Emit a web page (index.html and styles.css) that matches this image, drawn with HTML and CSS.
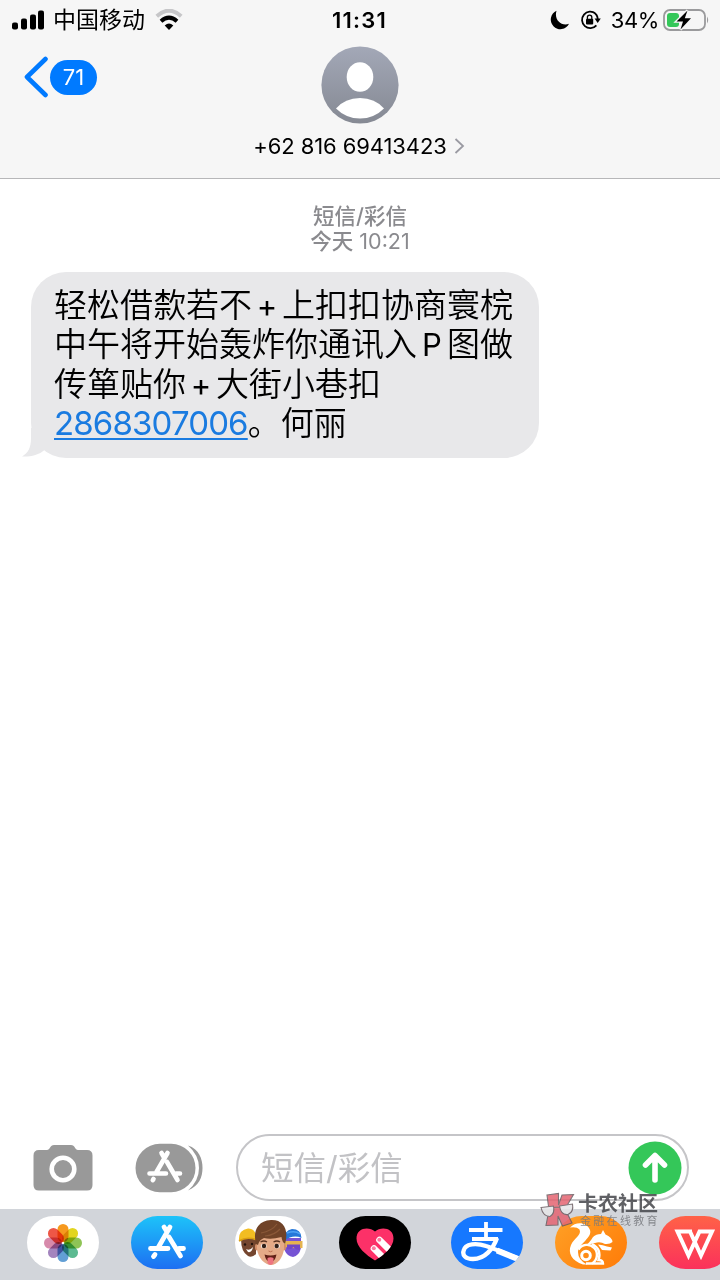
FILE: index.html
```html
<!DOCTYPE html>
<html lang="zh-CN">
<head>
    <meta charset="UTF-8">
    <meta name="viewport" content="width=device-width, initial-scale=1.0">
    <title>短信</title>
    <link rel="stylesheet" href="styles.css">
</head>
<body>
    <div class="phone">
        <header class="header">
            <!-- Status bar -->
            <div class="status-bar">
                <div class="status-left">
                    <svg class="signal" width="33" height="20" viewBox="0 0 33 20">
                        <rect x="0" y="12.5" width="6" height="7" rx="2"/>
                        <rect x="9" y="8.5" width="6" height="11" rx="2"/>
                        <rect x="18" y="4.5" width="6" height="15" rx="2"/>
                        <rect x="26" y="0.5" width="6" height="19" rx="2"/>
                    </svg>
                    <span class="carrier">中国移动</span>
                    <svg class="wifi" width="28" height="22" viewBox="0 0 28 22">
                        <path d="M1.8 7.2Q14-3.8 26.2 7.2" fill="none" stroke="#c6c6c8" stroke-width="4"/>
                        <path d="M6 12.2Q14 5 22 12.2" fill="none" stroke="#000" stroke-width="4"/>
                        <path d="M9.7 16.5Q14 12.7 18.3 16.5L14 21Z"/>
                    </svg>
                </div>
                <span class="time">11:31</span>
                <div class="status-right">
                    <svg width="20" height="20" viewBox="0 0 20 20">
                        <path d="M6.5 0.8A9.6 9.6 0 1 0 19 13.8C11 16.5 3.8 9.5 6.5 0.8Z"/>
                    </svg>
                    <svg class="lock" width="21" height="20" viewBox="0 0 21 20">
                        <path d="M15.5 3.6A8.2 8.2 0 1 0 16.4 15.3M14 2.5A8.2 8.2 0 0 1 17.7 9" fill="none" stroke="#000" stroke-width="1.8"/>
                        <path d="M14.6 8.6H20.8L17.7 13Z"/>
                        <rect x="6" y="8.8" width="7.2" height="5.6" rx="1"/>
                        <path d="M7.4 9V7.3a2.2 2.2 0 0 1 4.4 0V9" fill="none" stroke="#000" stroke-width="1.3"/>
                    </svg>
                    <span class="percent">34%</span>
                    <svg class="battery" width="47" height="24" viewBox="0 0 47 24">
                        <rect x="1" y="2" width="41" height="20" rx="6" fill="none" stroke="#9a9a9c" stroke-width="1.8"/>
                        <path d="M44 8.5q2.4 3.5 0 7Z" fill="#9a9a9c"/>
                        <rect x="4" y="5" width="12" height="14" rx="3" fill="#34c759"/>
                        <path d="M24.5 2.5L13.5 13.5H20L17.5 21.5L28 10.2H21.8Z" stroke="#f6f6f6" stroke-width="2.6" paint-order="stroke"/>
                    </svg>
                </div>
            </div>

            <!-- Back button, avatar and number -->
            <div class="nav">
                <div class="back">
                    <svg width="24" height="42" viewBox="0 0 24 42">
                        <path d="M21.5 3L3 21L21.5 39" fill="none" stroke="#007aff" stroke-width="4.6" stroke-linecap="round" stroke-linejoin="round"/>
                    </svg>
                    <span class="badge">71</span>
                </div>
                <div class="contact">
                    <svg width="78" height="78" viewBox="0 0 78 78">
                        <defs>
                            <linearGradient id="avatarBg" x1="0" y1="0" x2="0" y2="1">
                                <stop offset="0" stop-color="#a3a8b7"/>
                                <stop offset="1" stop-color="#858993"/>
                            </linearGradient>
                        </defs>
                        <circle cx="39" cy="39" r="38.6" fill="url(#avatarBg)"/>
                        <ellipse cx="39" cy="31" rx="13.3" ry="14.8" fill="#fff"/>
                        <path d="M15 62.5Q24 52 39 52T63 62.5Q53 72.5 39 72.5T15 62.5Z" fill="#fff"/>
                    </svg>
                    <div class="number">
                        <span>+62 816 69413423</span>
                        <svg width="11" height="18" viewBox="0 0 11 18">
                            <path d="M1.5 2L9 9L1.5 16" fill="none" stroke="#9a9aa2" stroke-width="1.8"/>
                        </svg>
                    </div>
                </div>
            </div>
        </header>

        <!-- Conversation -->
        <main class="messages">
            <div class="stamp">
                <div class="stamp-type">短信/彩信</div>
                <div><span class="stamp-type">今天</span> 10:21</div>
            </div>
            <div class="bubble">
                <svg class="tail" width="40" height="30" viewBox="0 0 40 30">
                    <path d="M9 0V10C9 20 6 25 0 28.5C8 29 17 27 22.5 22L40 28V0Z" fill="#e8e8ea"/>
                </svg>
                <p>轻松借歀若不<span class="latin">+</span>上扣扣协商寰梡</p>
                <p>中午将开始轰炸你通讯入<span class="latin">P</span>图做</p>
                <p>传箪贴你<span class="latin">+</span>大街小巷扣</p>
                <p><a class="link">2868307006</a>。何丽</p>
            </div>
        </main>

        <!-- Message input -->
        <div class="compose">
            <svg class="camera" width="60" height="47" viewBox="0 0 60 47">
                <path d="M6 6H14C17 6 17 1 21 1H38C42 1 42 6 45 6H54Q59.5 6 59.5 11.5V41Q59.5 46.5 54 46.5H6Q.5 46.5 .5 41V11.5Q.5 6 6 6Z" fill="#999"/>
                <circle cx="30" cy="25" r="11.3" fill="none" stroke="#fff" stroke-width="4.6"/>
            </svg>
            <svg class="apps" width="69" height="50" viewBox="0 0 69 50">
                <path d="M53 2.5C64 6 67.5 16 67.5 25S64 43 53 47.5Q64 38 64 25T53 2.5Z" fill="#999"/>
                <rect x="0.5" y="0.8" width="60" height="48.4" rx="24.2" fill="#999"/>
                <path d="M14.5 30.5H31M41 30.5H45M26.5 10L28.5 13.5M32.5 10L21.5 29M32 19L42.5 37M18.5 36L17.8 37.2" fill="none" stroke="#fff" stroke-width="4.6" stroke-linecap="round"/>
            </svg>
            <div class="input">
                <span class="placeholder">短信/彩信</span>
                <svg width="54" height="54" viewBox="0 0 54 54">
                    <circle cx="27" cy="27" r="26.5" fill="#34c759"/>
                    <path d="M27 39V15M17.5 24L27 14.5L36.5 24" fill="none" stroke="#fff" stroke-width="5.6" stroke-linecap="round" stroke-linejoin="round"/>
                </svg>
            </div>
        </div>

        <!-- App drawer -->
        <div class="drawer">
            <div class="app photos">
                <svg width="40" height="40" viewBox="-20 -20 40 40">
                    <g class="petals">
                        <rect x="-5.5" y="-19" width="11" height="18" rx="5.5" fill="#f6991e"/>
                        <rect x="-5.5" y="-19" width="11" height="18" rx="5.5" fill="#e2d51f" transform="rotate(45)"/>
                        <rect x="-5.5" y="-19" width="11" height="18" rx="5.5" fill="#8fc456" transform="rotate(90)"/>
                        <rect x="-5.5" y="-19" width="11" height="18" rx="5.5" fill="#5cba91" transform="rotate(135)"/>
                        <rect x="-5.5" y="-19" width="11" height="18" rx="5.5" fill="#629fd5" transform="rotate(180)"/>
                        <rect x="-5.5" y="-19" width="11" height="18" rx="5.5" fill="#a384be" transform="rotate(225)"/>
                        <rect x="-5.5" y="-19" width="11" height="18" rx="5.5" fill="#d78aab" transform="rotate(270)"/>
                        <rect x="-5.5" y="-19" width="11" height="18" rx="5.5" fill="#ee5746" transform="rotate(315)"/>
                    </g>
                </svg>
            </div>
            <div class="app store">
                <svg width="72" height="53" viewBox="0 0 72 53">
                    <path d="M19.5 32.5H37M48 32.5H52.5M33 11L35.5 15M39 11L27.5 31M38 21L49.5 40M24 38.5L22.5 40.5" fill="none" stroke="#fff" stroke-width="4.8" stroke-linecap="round"/>
                </svg>
            </div>
            <div class="app memoji">
                <svg width="72" height="53" viewBox="0 0 72 53">
                    <path d="M6 23H21V38Q17 42 13 40Q6 36 6 23Z" fill="#75462f"/>
                    <path d="M4 25Q3 14 13 12.5Q21 12 22 24Q12 20 4 25Z" fill="#f2bd22"/>
                    <path d="M4 25Q12 20 22 24" fill="none" stroke="#d99d12" stroke-width="1.5"/>
                    <path d="M11 33Q15 35 18 31Q17 37 13 36Z" fill="#fff"/>
                    <circle cx="10" cy="28.5" r="1.2" fill="#25140e"/><circle cx="17" cy="28" r="1.2" fill="#25140e"/>
                    <path d="M50 22H66V32Q64 40 58 41Q52 40 50 35Z" fill="#7653d4"/>
                    <path d="M49 25Q49 14 57 13Q66 13 66.5 22Q58 18 49 25Z" fill="#2477d9"/>
                    <path d="M52 17Q60 14 65 18" fill="none" stroke="#4ca2f4" stroke-width="1.5"/>
                    <path d="M50 25H67.5V32Q59 33 50 31Z" fill="#e5b350"/>
                    <path d="M52 28.5H65V34Q60 34 58.5 31Q56 34 52 33Z" fill="#7046c8"/>
                    <ellipse cx="22" cy="31" rx="2" ry="3.5" fill="#d58e68"/>
                    <ellipse cx="49" cy="31" rx="2" ry="3.5" fill="#d58e68"/>
                    <path d="M22 20Q35 10 49 20V33C48 42 42 49 36 49S23 42 22 33Z" fill="#e5aa87"/>
                    <path d="M21 28C18 17 21 5 36 4C49 3.5 54 14 50 28Q47 26 46.5 21Q36 24 29 22Q24 24 23 29Z" fill="#704328"/>
                    <path d="M26 17Q37 15 42 8M30 20Q40 19 45 13" fill="none" stroke="#8a5838" stroke-width="1.2"/>
                    <path d="M25.5 26Q29 24 32 26M38.5 26Q42 24 45 26" fill="none" stroke="#5d3522" stroke-width="1.3"/>
                    <ellipse cx="28.8" cy="30" rx="2.9" ry="2.3" fill="#f8eee9"/><ellipse cx="42" cy="30" rx="2.9" ry="2.3" fill="#f8eee9"/>
                    <circle cx="29" cy="30" r="2.2" fill="#322018"/><circle cx="41.7" cy="30" r="2.2" fill="#322018"/>
                    <path d="M33.5 35Q35.5 36.5 37.5 35" fill="none" stroke="#be7051"/>
                    <path d="M29.5 38.5Q35.5 40.5 41.5 38.5Q40 46 35.5 46T29.5 38.5Z" fill="#612016"/>
                    <path d="M32.5 42Q35.5 40.5 38.5 42V47Q35.5 51 32.5 47Z" fill="#ee7480"/>
                </svg>
            </div>
            <div class="app touch">
                <svg width="72" height="53" viewBox="0 0 72 53">
                    <defs>
                        <clipPath id="heart">
                            <path d="M36 44.5C27 39 17.5 31 17.5 22.5C17.5 11.5 30 10 36 15.5C42 10 54.5 11.5 54.5 22.5C54.5 31 45 39 36 44.5Z"/>
                        </clipPath>
                    </defs>
                    <g clip-path="url(#heart)">
                        <rect x="16" y="10" width="40" height="36" fill="#fc3168"/>
                        <path d="M35 32.5L48 45.5M40.5 24L56 39.5" stroke="#fff" stroke-width="6.6" stroke-linecap="round"/>
                        <circle cx="34.8" cy="32.3" r="2" fill="#fc7b9f"/><circle cx="40.3" cy="23.8" r="2" fill="#fc7b9f"/>
                    </g>
                </svg>
            </div>
            <div class="divider"></div>
            <div class="app alipay">
                <svg width="72" height="53" viewBox="0 0 72 53">
                    <g fill="none" stroke="#fff">
                        <path d="M18 14H51.5M21 23H47M35 6V23" stroke-width="3.8"/>
                        <path d="M46 22C42 33 34 43 22 43C14 43 11.5 39 12.5 35C14 27 26 27 35 30C45 33 54 38 66 42" stroke-width="4.4"/>
                        <path d="M46 34.5L67 43" stroke-width="6"/>
                    </g>
                </svg>
            </div>
            <div class="app uc">
                <svg width="72" height="53" viewBox="0 0 72 53">
                    <path d="M28 48.5C17 45 12.5 37 16 29C19 22 27 19 24.5 13.5Q22 10.5 15 11.5C21 5 32 6 35 14C37.5 22 24 27 23 36Q23 44 32 48.5Z" fill="#fff"/>
                    <path d="M29 30Q34 28 38 21Q41 18 46 18L48 14L50.5 18.5Q57 21 57.5 26Q55 28.5 50 28Q45 25 40 27Q35 28 29 30Z" fill="#fff"/>
                    <path d="M43 28.5Q48 29 52 30.5L57 31.5L55.5 34.5Q51 34 47 34Z" fill="#fff"/>
                    <g fill="none" stroke="#fff">
                        <circle cx="31" cy="39.5" r="4.3" stroke-width="3"/>
                        <path d="M23.5 33.5A10 10 0 1 1 37 47.5" stroke-width="2.4"/>
                        <path d="M31 47.5H48Q48 44 43.5 44Q47 33 37 28" stroke-width="2.4"/>
                    </g>
                </svg>
            </div>
            <div class="app wps">
                <svg width="72" height="53" viewBox="0 0 72 53">
                    <path d="M33 15.5H18.5L29.5 39.5L40.5 15.5H53L42 39.5L31 15.5" fill="none" stroke="#fff" stroke-width="4"/>
                </svg>
            </div>
        </div>

        <!-- Community watermark -->
        <div class="watermark">
            <svg width="36" height="35" viewBox="0 0 36 35">
                <path d="M7 3L18.5 1.5V13L22 3L33.5 2.5L25 17L32 31L22.5 34L18 24V33L6 33.5L9 18Z" fill="#e46472" stroke="#6a5b60" stroke-width="1.1"/>
                <path d="M1 15.5L13.5 14Q15 22 10 24.500Q3 24.5 1 15.5ZM19.500 14L32.5 12Q34 20 28 22.5Q21 23.5 19.500 14ZM13.5 15.5L19.500 15" fill="#e6e6e8" stroke="#6a5b60" stroke-width="1.1"/>
            </svg>
            <div class="watermark-text">
                <div class="watermark-name">卡农社区</div>
                <div class="watermark-sub">金融在线教育</div>
            </div>
        </div>
    </div>
</body>
</html>
```

FILE: styles.css
```css
body {
    margin: 0;
    background-color: #fff;
    color: #000;
    font-family: Inter, "Noto Sans CJK SC", sans-serif;
}

svg {
    display: block;
    flex-shrink: 0;
}

p {
    margin: 0;
}

.phone {
    position: relative;
    display: flex;
    flex-direction: column;
    width: 720px;
    height: 1280px;
    overflow: hidden;
}

/* Header */
.header {
    height: 178px;
    background-color: #f6f6f6;
    border-bottom: 1px solid #b7b7b9;
}

.status-bar {
    display: grid;
    grid-template-columns: 1fr auto 1fr;
    align-items: center;
    height: 40px;
    padding: 0 10px 0 12px;
}

.status-left,
.status-right {
    display: flex;
    align-items: center;
}

.status-right {
    justify-content: flex-end;
}

.carrier {
    margin: 0 10px 0 8px;
    font-size: 23px;
    line-height: 40px;
}

.time {
    font-size: 22px;
    font-weight: 600;
    letter-spacing: 1.2px;
    margin-right: 3px;
}

.lock {
    margin: 0 10px 0 10px;
}

.percent {
    margin-right: 4px;
    font-size: 22px;
    letter-spacing: -0.4px;
}

.nav {
    display: grid;
    grid-template-columns: 1fr auto 1fr;
    padding: 6px 24px 0;
}

.back {
    display: flex;
    align-items: center;
    height: 62px;
    gap: 2px;
}

.badge {
    width: 47px;
    height: 35px;
    border-radius: 18px;
    background-color: #007aff;
    color: #fff;
    font-size: 22px;
    line-height: 35px;
    text-align: center;
}

.contact {
    display: flex;
    flex-direction: column;
    align-items: center;
}

.number {
    display: flex;
    align-items: center;
    gap: 7px;
    margin: 8px 2px 0 0;
    font-size: 22px;
    letter-spacing: -0.1px;
    line-height: 28px;
}

/* Messages */
.messages {
    flex: 1;
}

.stamp {
    padding-top: 25px;
    color: #8a8a8e;
    font-size: 21.5px;
    line-height: 25px;
    text-align: center;
}

.stamp-type {
    font-weight: 500;
}

.bubble {
    position: relative;
    box-sizing: border-box;
    width: 508px;
    height: 186px;
    margin: 18px 0 0 31px;
    padding: 14px 0 0 23px;
    border-radius: 35px;
    background-color: #e8e8ea;
    font-size: 33px;
    font-weight: 350;
    line-height: 39.3px;
    white-space: nowrap;
    z-index: 0;
}

.bubble p {
    height: 39.3px;
}

/* Sits behind the text */
.tail {
    position: absolute;
    left: -9px;
    bottom: 0;
    z-index: -1;
}

.latin {
    display: inline-block;
    width: 30px;
    font-size: 31px;
    font-weight: 400;
    text-align: center;
}

.link {
    color: #1a7be0;
    font-weight: 400;
    letter-spacing: -0.85px;
    text-decoration: underline;
    text-decoration-thickness: 2px;
    text-underline-offset: 3px;
}

/* Compose row */
.compose {
    display: flex;
    align-items: center;
    height: 83px;
    padding: 0 31px 0 33px;
}

.apps {
    margin: 0 32px 0 42px;
}

.input {
    display: flex;
    flex: 1;
    align-items: center;
    justify-content: space-between;
    box-sizing: border-box;
    height: 67px;
    padding: 0 5px 0 23px;
    border: 2px solid #c5c5c8;
    border-radius: 34px;
}

.placeholder {
    padding-bottom: 4px;
    color: #c2c2c5;
    font-size: 32.5px;
}

/* App drawer */
.drawer {
    display: flex;
    align-items: center;
    box-sizing: border-box;
    height: 71px;
    padding: 0 0 4px 27px;
    background-color: #d2d5da;
}

.app {
    display: flex;
    flex: none;
    align-items: center;
    justify-content: center;
    width: 72px;
    height: 53px;
    margin-right: 32px;
    border-radius: 27px;
    overflow: hidden;
}

.photos,
.memoji {
    background-color: #fff;
}

.petals rect {
    mix-blend-mode: multiply;
}

.store {
    background: linear-gradient(#1dc3f9, #1d6ff2);
}

.touch {
    margin-right: 19px;
    background-color: #000;
}

.divider {
    width: 2px;
    height: 48px;
    margin-right: 21px;
    background-color: #b7babf;
}

.alipay {
    background-color: #1678ff;
}

.uc {
    background: linear-gradient(135deg, #ffa126, #ff7b08);
}

.wps {
    background: linear-gradient(#ff6247, #fb315b);
}

/* Watermark over the input and the drawer */
.watermark {
    position: absolute;
    left: 540px;
    top: 1192px;
    display: flex;
    gap: 2px;
    opacity: 0.85;
    white-space: nowrap;
}

.watermark-name {
    color: #45464b;
    font-size: 20px;
    font-weight: 700;
    line-height: 24px;
}

.watermark-sub {
    color: #77797e;
    font-size: 11px;
    letter-spacing: 2.3px;
    line-height: 11px;
    padding-left: 2px;
}
```
